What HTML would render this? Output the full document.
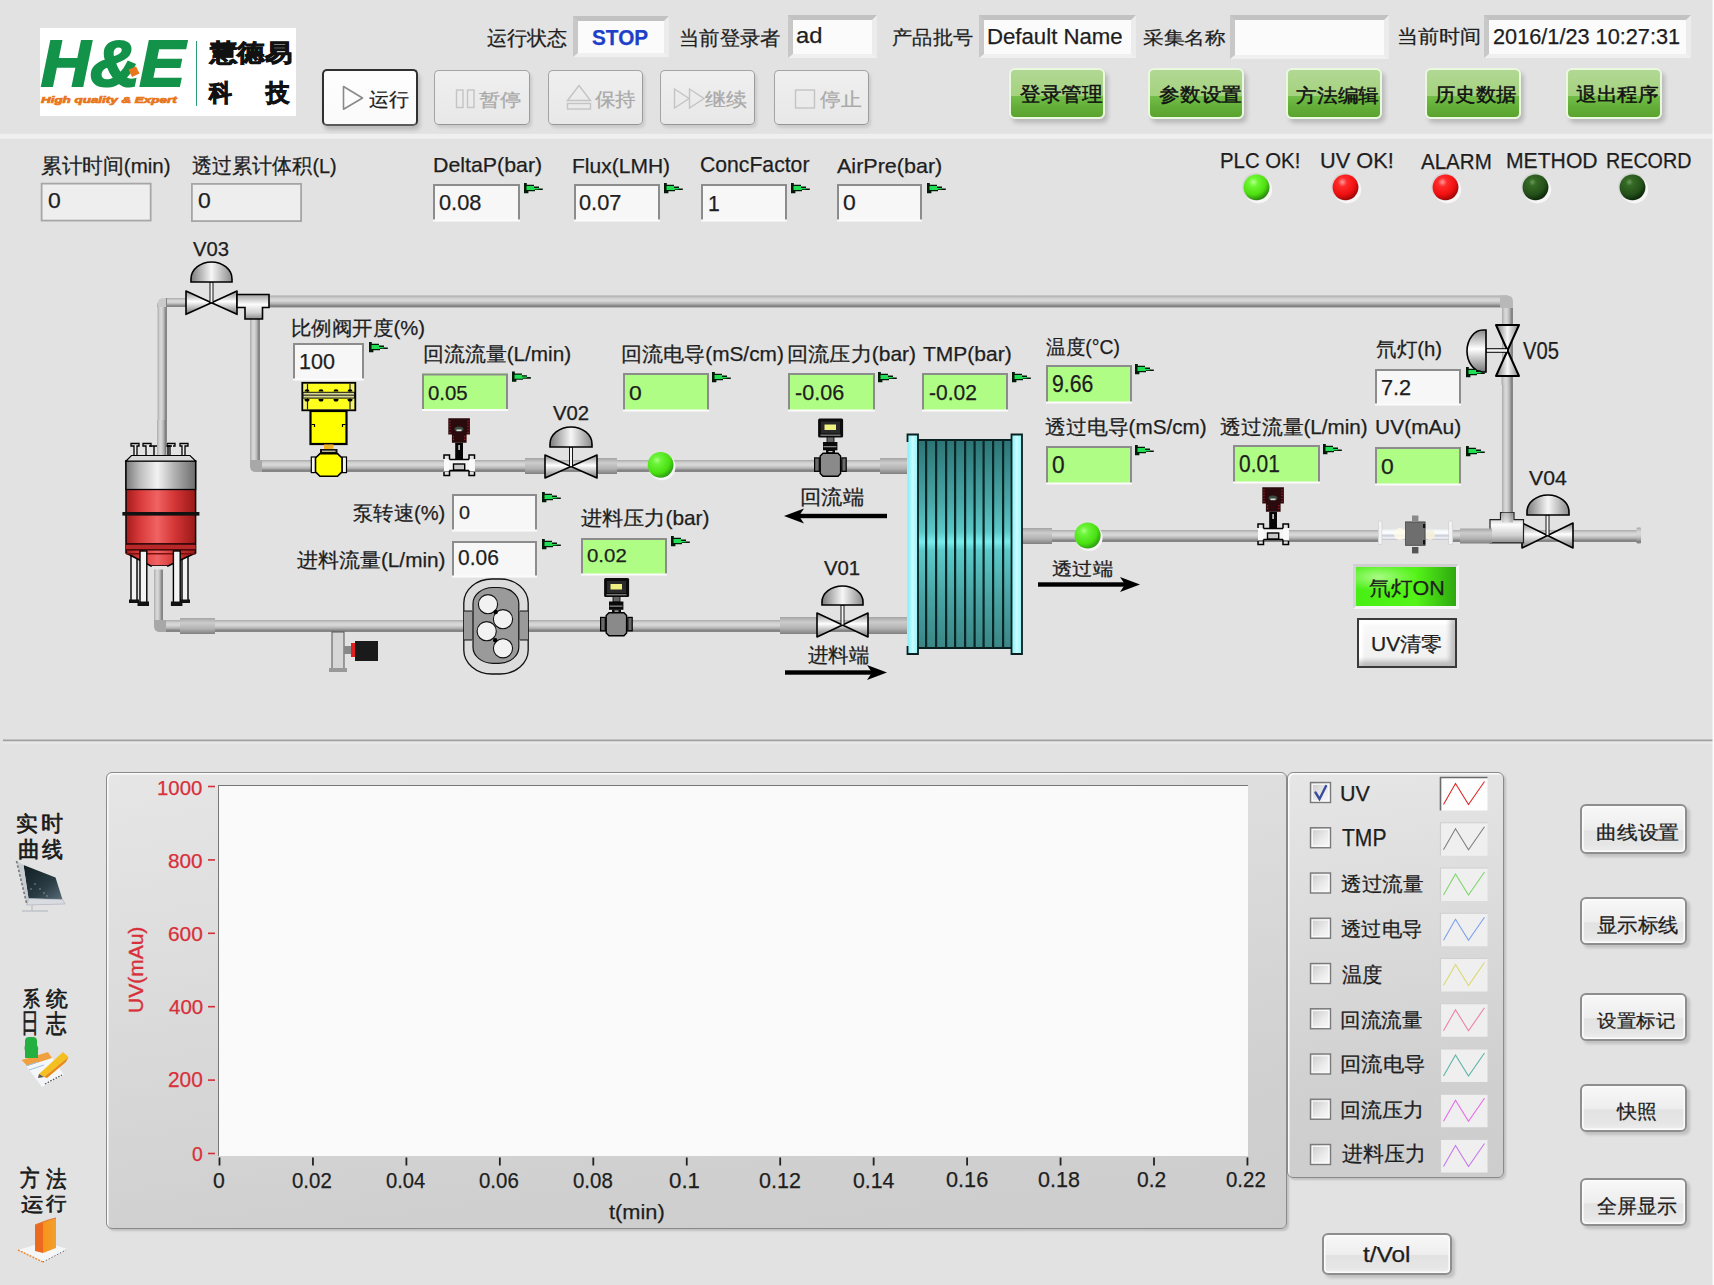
<!DOCTYPE html><html><head><meta charset="utf-8"><style>
*{margin:0;padding:0}
html,body{width:1714px;height:1285px;overflow:hidden;background:#e2e2e2}
body{position:relative;font-family:"Liberation Sans",sans-serif}
.t{position:absolute;white-space:nowrap;transform-origin:0 0;-webkit-text-stroke:0.25px currentColor}
.inset{position:absolute;background:#fbfbfb;border-style:solid;border-width:5px 5px 4px 5px;border-color:#c2c2c2 #ececec #f0f0f0 #c8c8c8}
.btn{position:absolute;border-radius:5px;box-sizing:content-box}
.btn.focus{border:2.2px solid #303030;border-bottom-color:#5a5a5a;background:linear-gradient(#fefefe,#fafafa);box-shadow:2px 4px 4px rgba(0,0,0,.18)}
.btn.dis{border:1.8px solid #a4a4a4;border-bottom-color:#969696;border-right-color:#9c9c9c;background:linear-gradient(#efefef,#e8e8e8);box-shadow:2px 3px 3px rgba(0,0,0,.10)}
.gbtn{position:absolute;width:92px;height:47px;border:2.5px solid #eaf8e0;border-radius:6px;background:linear-gradient(#b2d894,#a4d27e 55%,#74bd4a 56%,#62ad38 80%,#5aa32e);box-shadow:3px 4px 4px rgba(0,0,0,.18)}
.panel{position:absolute;border:1.6px solid #8a8a8a;border-radius:6px;background:linear-gradient(172deg,#e6e6e6,#dcdcdc 35%,#d0d0d0 75%,#cdcdcd);box-shadow:inset 1.5px 1.5px 0 #fbfbfb,2px 2px 2px rgba(0,0,0,.15)}
.wbtn{position:absolute;box-sizing:content-box;border:2px solid #8e8e8e;border-radius:6px;background:linear-gradient(#f8f8f8,#ededed 52%,#e2e2e2 54%,#e6e6e6 85%,#eeeeee);box-shadow:inset 0 0 0 1.6px #fbfbfb,3px 3px 3px rgba(0,0,0,.15)}
</style></head><body><svg width="1714" height="1285" style="position:absolute;left:0;top:0"><defs>
<linearGradient id="pH" x1="0" y1="0" x2="0" y2="1"><stop offset="0" stop-color="#a9a9a9"/><stop offset=".22" stop-color="#d0d0d0"/><stop offset=".42" stop-color="#d9d9d9"/><stop offset=".65" stop-color="#bababa"/><stop offset=".9" stop-color="#7c7c7c"/><stop offset="1" stop-color="#8e8e8e"/></linearGradient>
<linearGradient id="pV" x1="0" y1="0" x2="1" y2="0"><stop offset="0" stop-color="#a9a9a9"/><stop offset=".22" stop-color="#d0d0d0"/><stop offset=".42" stop-color="#d9d9d9"/><stop offset=".65" stop-color="#bababa"/><stop offset=".9" stop-color="#7c7c7c"/><stop offset="1" stop-color="#8e8e8e"/></linearGradient>
<linearGradient id="pHs" x1="0" y1="0" x2="0" y2="1"><stop offset="0" stop-color="#a4a4a4"/><stop offset=".3" stop-color="#cccccc"/><stop offset=".65" stop-color="#b4b4b4"/><stop offset="1" stop-color="#808080"/></linearGradient>
<linearGradient id="metV" x1="0" y1="0" x2="0" y2="1"><stop offset="0" stop-color="#8a8a8a"/><stop offset=".45" stop-color="#ffffff"/><stop offset="1" stop-color="#777"/></linearGradient>
<linearGradient id="metH" x1="0" y1="0" x2="1" y2="0"><stop offset="0" stop-color="#7c7c7c"/><stop offset=".5" stop-color="#f6f6f6"/><stop offset="1" stop-color="#8a8a8a"/></linearGradient>
<linearGradient id="silver" x1="0" y1="0" x2="1" y2="0"><stop offset="0" stop-color="#7a7a7a"/><stop offset=".2" stop-color="#bdbdbd"/><stop offset=".45" stop-color="#f2f2f2"/><stop offset=".7" stop-color="#b0b0b0"/><stop offset="1" stop-color="#6c6c6c"/></linearGradient>
<linearGradient id="redT" x1="0" y1="0" x2="1" y2="0"><stop offset="0" stop-color="#a51c1c"/><stop offset=".2" stop-color="#d83a3a"/><stop offset=".45" stop-color="#f06262"/><stop offset=".7" stop-color="#d33535"/><stop offset="1" stop-color="#9a1818"/></linearGradient>
<linearGradient id="teal" x1="0" y1="0" x2="0" y2="1"><stop offset="0" stop-color="#2c7475"/><stop offset=".3" stop-color="#4aa8a8"/><stop offset=".44" stop-color="#5cc8c8"/><stop offset=".49" stop-color="#78ecec"/><stop offset=".53" stop-color="#5ccaca"/><stop offset=".75" stop-color="#4aa4a4"/><stop offset="1" stop-color="#3a8686"/></linearGradient>
<linearGradient id="tee" x1="0" y1="0" x2="0" y2="1"><stop offset="0" stop-color="#a0a0a0"/><stop offset=".4" stop-color="#fcfcfc"/><stop offset=".75" stop-color="#d0d0d0"/><stop offset="1" stop-color="#8c8c8c"/></linearGradient>
<linearGradient id="glass" x1="0" y1="0" x2="0" y2="1"><stop offset="0" stop-color="#f0f2f6"/><stop offset=".35" stop-color="#ffffff"/><stop offset=".6" stop-color="#c8ccd6"/><stop offset=".8" stop-color="#f6f6fa"/><stop offset="1" stop-color="#b8bcc4"/></linearGradient>
<linearGradient id="cyanF" x1="0" y1="0" x2="1" y2="0"><stop offset="0" stop-color="#7ff0f8"/><stop offset=".5" stop-color="#c8fcff"/><stop offset="1" stop-color="#8ff4fa"/></linearGradient>
<radialGradient id="ledG" cx=".38" cy=".3" r=".7"><stop offset="0" stop-color="#b4ff90"/><stop offset=".25" stop-color="#6cf830"/><stop offset=".7" stop-color="#4ede10"/><stop offset="1" stop-color="#2a8a10"/></radialGradient>
<radialGradient id="ledR" cx=".38" cy=".3" r=".7"><stop offset="0" stop-color="#ff9a9a"/><stop offset=".25" stop-color="#ff2a2a"/><stop offset=".7" stop-color="#f01010"/><stop offset="1" stop-color="#a00808"/></radialGradient>
<radialGradient id="ledD" cx=".38" cy=".3" r=".7"><stop offset="0" stop-color="#6a9a5a"/><stop offset=".2" stop-color="#356a25"/><stop offset=".7" stop-color="#24501a"/><stop offset="1" stop-color="#0e2a0a"/></radialGradient>
<radialGradient id="gBall" cx=".36" cy=".32" r=".72"><stop offset="0" stop-color="#a8ff80"/><stop offset=".22" stop-color="#6cf43a"/><stop offset=".7" stop-color="#48e010"/><stop offset="1" stop-color="#2c9a14"/></radialGradient>
<linearGradient id="yel" x1="0" y1="0" x2="1" y2="0"><stop offset="0" stop-color="#e0e000"/><stop offset=".5" stop-color="#ffff30"/><stop offset="1" stop-color="#e8e800"/></linearGradient>
</defs><rect x="0" y="133.8" width="1714" height="5" fill="#efefef"/><rect x="3" y="739.5" width="1710" height="2" fill="#a0a0a0"/><rect x="3" y="741.5" width="1710" height="2" fill="#e9e9e9"/><rect x="1712.5" y="0" width="2" height="1285" fill="#fcfcfc"/><rect x="40.7" y="182.7" width="110.89999999999999" height="38.80000000000001" fill="#eeeeee"/><rect x="41.6" y="183.6" width="109.1" height="37.000000000000014" fill="none" stroke="#a6a6a6" stroke-width="1.8"/><rect x="191" y="183" width="111" height="39" fill="#eeeeee"/><rect x="191.9" y="183.9" width="109.2" height="37.2" fill="none" stroke="#a6a6a6" stroke-width="1.8"/><rect x="433" y="184" width="87" height="36" fill="#f7f7f7"/><path d="M434 220V185H519V220" fill="none" stroke="#8c8c8c" stroke-width="2"/><rect x="433" y="219.5" width="87" height="2" fill="#fbfbfb"/><g transform="translate(524,183)"><path d="M0 0H2.8V1.8H10V3.6H15V5.4H18.8V7.1H11V8.2H4.4V10.2H0Z" fill="#021a06"/><path d="M2.5 3.1H10V4.9H14.8V6.2H10.8V7.1H2.5Z" fill="#22de55"/></g><rect x="574" y="184" width="86" height="36" fill="#f7f7f7"/><path d="M575 220V185H659V220" fill="none" stroke="#8c8c8c" stroke-width="2"/><rect x="574" y="219.5" width="86" height="2" fill="#fbfbfb"/><g transform="translate(664,183)"><path d="M0 0H2.8V1.8H10V3.6H15V5.4H18.8V7.1H11V8.2H4.4V10.2H0Z" fill="#021a06"/><path d="M2.5 3.1H10V4.9H14.8V6.2H10.8V7.1H2.5Z" fill="#22de55"/></g><rect x="701" y="184" width="86" height="36" fill="#f7f7f7"/><path d="M702 220V185H786V220" fill="none" stroke="#8c8c8c" stroke-width="2"/><rect x="701" y="219.5" width="86" height="2" fill="#fbfbfb"/><g transform="translate(791,183)"><path d="M0 0H2.8V1.8H10V3.6H15V5.4H18.8V7.1H11V8.2H4.4V10.2H0Z" fill="#021a06"/><path d="M2.5 3.1H10V4.9H14.8V6.2H10.8V7.1H2.5Z" fill="#22de55"/></g><rect x="837" y="184" width="85" height="36" fill="#f7f7f7"/><path d="M838 220V185H921V220" fill="none" stroke="#8c8c8c" stroke-width="2"/><rect x="837" y="219.5" width="85" height="2" fill="#fbfbfb"/><g transform="translate(927,183)"><path d="M0 0H2.8V1.8H10V3.6H15V5.4H18.8V7.1H11V8.2H4.4V10.2H0Z" fill="#021a06"/><path d="M2.5 3.1H10V4.9H14.8V6.2H10.8V7.1H2.5Z" fill="#22de55"/></g><circle cx="1258.3" cy="189.5" r="13.9" fill="#f6f6f6"/><circle cx="1255.9" cy="186.70000000000002" r="13.700000000000001" fill="#c8c8c8" opacity=".55"/><circle cx="1256.5" cy="187.3" r="12.9" fill="url(#ledG)"/><circle cx="1347.3" cy="189.5" r="13.9" fill="#f6f6f6"/><circle cx="1344.9" cy="186.70000000000002" r="13.700000000000001" fill="#c8c8c8" opacity=".55"/><circle cx="1345.5" cy="187.3" r="12.9" fill="url(#ledR)"/><circle cx="1447.3" cy="189.5" r="13.9" fill="#f6f6f6"/><circle cx="1444.9" cy="186.70000000000002" r="13.700000000000001" fill="#c8c8c8" opacity=".55"/><circle cx="1445.5" cy="187.3" r="12.9" fill="url(#ledR)"/><circle cx="1537.3" cy="189.5" r="13.9" fill="#f6f6f6"/><circle cx="1534.9" cy="186.70000000000002" r="13.700000000000001" fill="#c8c8c8" opacity=".55"/><circle cx="1535.5" cy="187.3" r="12.9" fill="url(#ledD)"/><circle cx="1634.3" cy="189.5" r="13.9" fill="#f6f6f6"/><circle cx="1631.9" cy="186.70000000000002" r="13.700000000000001" fill="#c8c8c8" opacity=".55"/><circle cx="1632.5" cy="187.3" r="12.9" fill="url(#ledD)"/><rect x="157" y="298" width="33" height="9" fill="url(#pH)"/><rect x="157.6" y="298" width="9.400000000000006" height="144" fill="url(#pV)"/><rect x="268" y="295.5" width="1245" height="12.0" fill="url(#pH)"/><rect x="250" y="316" width="10" height="156" fill="url(#pV)"/><rect x="250" y="460" width="657" height="12" fill="url(#pH)"/><rect x="525" y="458" width="22" height="16" fill="url(#pHs)"/><rect x="595" y="458" width="22" height="16" fill="url(#pHs)"/><rect x="880" y="458" width="27" height="16" fill="url(#pHs)"/><rect x="154" y="566" width="9" height="66" fill="url(#pV)"/><rect x="154" y="620" width="753" height="12" fill="url(#pH)"/><rect x="180" y="618" width="35" height="16" fill="url(#pHs)"/><rect x="780" y="617" width="40" height="17" fill="url(#pHs)"/><rect x="866" y="617" width="41" height="17" fill="url(#pHs)"/><rect x="1502" y="300" width="11" height="222" fill="url(#pV)"/><rect x="1022" y="530" width="618" height="12" fill="url(#pH)"/><rect x="1022" y="528" width="30" height="16" fill="url(#pHs)"/><rect x="156" y="297" width="6" height="6" fill="#e2e2e2"/><path d="M157.6 307V304Q157.6 298 163.6 298H166V307Z" fill="#cacaca"/><rect x="249" y="467" width="6" height="6" fill="#e2e2e2"/><path d="M250 460V466Q250 472 256 472H262V460Z" fill="#a8a8a8"/><rect x="153" y="627" width="6" height="6" fill="#e2e2e2"/><path d="M154 620V626Q154 632 160 632H166V620Z" fill="#a8a8a8"/><rect x="1508" y="295" width="6" height="6" fill="#e2e2e2"/><path d="M1500 295.5H1507Q1513 295.5 1513 301.5V308H1500Z" fill="#b8b8b8"/><path d="M186 291L211.5 302.65L186 314.3Z" fill="url(#metV)" stroke="#000" stroke-width="1.6" stroke-linejoin="round"/><path d="M237 291L211.5 302.65L237 314.3Z" fill="url(#metV)" stroke="#000" stroke-width="1.6" stroke-linejoin="round"/><rect x="210.0" y="282" width="3" height="20.649999999999977" fill="#f4f4f4" stroke="#000" stroke-width=".9"/><path d="M191 282L191 279A20.5 17 0 0 1 232 279L232 282Z" fill="url(#metH)" stroke="#000" stroke-width="1.6"/><path d="M237 294.5H269V307.5H262.5V319H245V307.5H237Z" fill="url(#tee)" stroke="#000" stroke-width="1.6"/><path d="M545 455L571.0 466.5L545 478Z" fill="url(#metV)" stroke="#000" stroke-width="1.6" stroke-linejoin="round"/><path d="M597 455L571.0 466.5L597 478Z" fill="url(#metV)" stroke="#000" stroke-width="1.6" stroke-linejoin="round"/><rect x="569.5" y="447" width="3" height="19.5" fill="#f4f4f4" stroke="#000" stroke-width=".9"/><path d="M550 447L550 444A21.0 17 0 0 1 592 444L592 447Z" fill="url(#metH)" stroke="#000" stroke-width="1.6"/><path d="M817 613L842.5 625.0L817 637Z" fill="url(#metV)" stroke="#000" stroke-width="1.6" stroke-linejoin="round"/><path d="M868 613L842.5 625.0L868 637Z" fill="url(#metV)" stroke="#000" stroke-width="1.6" stroke-linejoin="round"/><rect x="841.0" y="605" width="3" height="20.0" fill="#f4f4f4" stroke="#000" stroke-width=".9"/><path d="M822 605L822 602A20.5 16 0 0 1 863 602L863 605Z" fill="url(#metH)" stroke="#000" stroke-width="1.6"/><path d="M1522 523L1547.5 535.5L1522 548Z" fill="url(#metV)" stroke="#000" stroke-width="1.6" stroke-linejoin="round"/><path d="M1573 523L1547.5 535.5L1573 548Z" fill="url(#metV)" stroke="#000" stroke-width="1.6" stroke-linejoin="round"/><rect x="1546.0" y="515" width="3" height="20.5" fill="#f4f4f4" stroke="#000" stroke-width=".9"/><path d="M1527 515L1527 512A21.0 17 0 0 1 1569 512L1569 515Z" fill="url(#metH)" stroke="#000" stroke-width="1.6"/><path d="M1490 519.6H1500.5V512.5H1514V519.6H1523.5V542.9H1490Z" fill="url(#tee)" stroke="#222" stroke-width="1.2"/><rect x="1502" y="512.5" width="11" height="10" fill="url(#pV)" opacity=".5"/><rect x="1636.5" y="527.5" width="4.5" height="16" rx="1" fill="url(#pH)"/><rect x="1501.5" y="376" width="11.5" height="9" fill="url(#pV)"/><path d="M1496 325L1507.5 350.5L1519 325Z" fill="url(#metH)" stroke="#000" stroke-width="2" stroke-linejoin="round"/><path d="M1496 376L1507.5 350.5L1519 376Z" fill="url(#metH)" stroke="#000" stroke-width="2" stroke-linejoin="round"/><rect x="1486" y="348.7" width="21.5" height="3.6" fill="#f4f4f4" stroke="#000" stroke-width="1"/><path d="M1486 330L1483 330A16 21.0 0 0 0 1483 372L1486 372Z" fill="url(#metV)" stroke="#000" stroke-width="1.6"/><circle cx="662.1" cy="466.8" r="13.4" fill="#f6f6f6"/><circle cx="660.6" cy="464.8" r="12.9" fill="url(#gBall)"/><circle cx="1089.1" cy="537.5" r="13.5" fill="#f6f6f6"/><circle cx="1087.6" cy="535.5" r="13" fill="url(#gBall)"/><rect x="794" y="513.8" width="93" height="4.4" fill="#000"/><path d="M784 516L804 508.5L799 516L804 523.5Z" fill="#000"/><rect x="1038" y="582.3" width="92" height="4.4" fill="#000"/><path d="M1140 584.5L1120 577.0L1125 584.5L1120 592.0Z" fill="#000"/><rect x="785" y="670.3" width="92" height="4.4" fill="#000"/><path d="M887 672.5L867 665.0L872 672.5L867 680.0Z" fill="#000"/><rect x="917" y="440" width="95" height="208" fill="url(#teal)" stroke="#0a2020" stroke-width="2"/><rect x="925" y="440" width="2.2" height="208" fill="#0a2626"/><rect x="935" y="440" width="2.2" height="208" fill="#0a2626"/><rect x="945" y="440" width="2.2" height="208" fill="#0a2626"/><rect x="954" y="440" width="2.2" height="208" fill="#0a2626"/><rect x="964" y="440" width="2.2" height="208" fill="#0a2626"/><rect x="973.5" y="440" width="2.2" height="208" fill="#0a2626"/><rect x="982.5" y="440" width="2.2" height="208" fill="#0a2626"/><rect x="992" y="440" width="2.2" height="208" fill="#0a2626"/><rect x="1002" y="440" width="2.2" height="208" fill="#0a2626"/><path d="M907.5 442V434.5H918V654H907.5V646" fill="url(#cyanF)" stroke="#0a2020" stroke-width="1.8"/><path d="M1011.5 434.5H1022V654H1011.5Z" fill="url(#cyanF)" stroke="#0a2020" stroke-width="1.8"/><g><rect x="131" y="556" width="6" height="45" fill="#f2f2f2" stroke="#000" stroke-width="1.4"/><rect x="129" y="599.5" width="10" height="3.5" fill="#111"/><rect x="182" y="556" width="6" height="45" fill="#f2f2f2" stroke="#000" stroke-width="1.4"/><rect x="180" y="599.5" width="10" height="3.5" fill="#111"/><path d="M126 461V553L151 566H168L195.6 553V461Z" fill="url(#redT)" stroke="#000" stroke-width="1.5"/><rect x="126" y="553" width="69.6" height="1.5" fill="#7a1010"/><rect x="122.4" y="512" width="77" height="3.6" fill="#111"/><rect x="126" y="543" width="69.6" height="1.8" fill="#3a0808"/><rect x="126" y="545" width="69.6" height="4.5" fill="#b82828"/><rect x="126" y="549" width="69.6" height="1.6" fill="#4a0a0a"/><rect x="126" y="461" width="69.6" height="28.5" fill="url(#silver)" stroke="#000" stroke-width="1.3"/><path d="M126 461L131.5 455.5H190L195.6 461Z" fill="#d8d8d8" stroke="#000" stroke-width="1.1"/><path d="M134 455V446H131V443.5H139V446H137V455M146 455V446H143V443.5H151V446H149M170 455V446H167V443.5H175V446H173M182 455V446H180V443.5H188V446H185V455" fill="#eee" stroke="#000" stroke-width="1.3"/><path d="M150 446H172M154 446V455M168 446V455" stroke="#000" stroke-width="1.4"/><rect x="157" y="420" width="9.5" height="35" fill="url(#pV)"/><rect x="152" y="566" width="15" height="3.5" fill="#e4e4e4"/><rect x="140" y="551" width="6.8" height="52" fill="#f4f4f4" stroke="#000" stroke-width="1.4"/><rect x="137.5" y="601.5" width="11.5" height="4.5" fill="#111"/><rect x="173.4" y="551" width="6.8" height="52" fill="#f4f4f4" stroke="#000" stroke-width="1.4"/><rect x="170.9" y="601.5" width="11.5" height="4.5" fill="#111"/></g><rect x="302.3" y="382.8" width="53" height="27.5" fill="#f4f46a" stroke="#000" stroke-width="1.8"/><rect x="308" y="384" width="41.5" height="25" fill="#ffff1e"/><path d="M307.5 383.5V409.5M350 383.5V409.5" stroke="#222" stroke-width="1.2"/><rect x="303" y="392.3" width="51.5" height="5.8" fill="#d8d890" stroke="#111" stroke-width="1"/><rect x="303" y="394.6" width="51.5" height="1.1" fill="#222"/><path d="M304.5 391.5A2.5 2.3 0 0 1 309.5 391.5Z" fill="#000"/><path d="M304.5 399A2.5 2.6 0 0 0 309.5 399Z" fill="#000"/><path d="M318.5 391.5A2.5 2.3 0 0 1 323.5 391.5Z" fill="#000"/><path d="M318.5 399A2.5 2.6 0 0 0 323.5 399Z" fill="#000"/><path d="M333.5 391.5A2.5 2.3 0 0 1 338.5 391.5Z" fill="#000"/><path d="M333.5 399A2.5 2.6 0 0 0 338.5 399Z" fill="#000"/><path d="M347.5 391.5A2.5 2.3 0 0 1 352.5 391.5Z" fill="#000"/><path d="M347.5 399A2.5 2.6 0 0 0 352.5 399Z" fill="#000"/><rect x="310.5" y="411" width="36" height="33" fill="#ffff00" stroke="#000" stroke-width="2.2"/><path d="M311.5 424.5H314.5V427M345.5 424.5H342.5V427" fill="none" stroke="#000" stroke-width="1.2"/><rect x="324" y="444.4" width="9.4" height="4.8" fill="#f0b428"/><rect x="320" y="449" width="17.5" height="4.6" fill="#111"/><rect x="322" y="450.6" width="13.5" height="1.3" fill="#c8c8a0"/><rect x="311.3" y="457" width="4.5" height="15.6" fill="#f4f4f0" stroke="#000" stroke-width="1.2"/><rect x="342" y="457" width="4.5" height="15.6" fill="#f4f4f0" stroke="#000" stroke-width="1.2"/><path d="M320 453.6H337.5L342 458V471.8L337.5 476.3H320L315.5 471.8V458Z" fill="#ffff00" stroke="#000" stroke-width="1.6"/><g transform="translate(0.0,0)"><path d="M448.3 418.2H469.9V434.5H466.6V442.7H451.9V434.5H448.3Z" fill="#2a0a0c"/><path d="M450 420.5V433M468 420.5V433M453.5 436V441M464.8 436V441" stroke="#b02030" stroke-width="1.2" stroke-dasharray="1.2 1.6"/><ellipse cx="459" cy="429" rx="4.5" ry="2.6" fill="#3a4a40"/><rect x="456.5" y="429.5" width="5" height="1.6" fill="#ddd"/><rect x="455.2" y="442.7" width="7.8" height="17.5" fill="#050505"/><rect x="458.3" y="445" width="1.6" height="5" fill="#ccc"/><rect x="444" y="459" width="31" height="12" fill="#f4f4f4"/><path d="M449 459.5H469.5M449 470.5H469.5" stroke="#000" stroke-width="1.5"/><path d="M446.5 455H444V459M446.5 455H449.5V459.5M449.5 470.5V475.5H444V472M472 455H474.5V459M472 455H469V459.5M469 470.5V475.5H474.5V472" fill="none" stroke="#000" stroke-width="1.5"/><rect x="444" y="459.5" width="5.5" height="11" fill="#fafafa"/><rect x="469" y="459.5" width="5.5" height="11" fill="#fafafa"/><rect x="453.5" y="464" width="11.2" height="6" fill="#c8c8c8" stroke="#000" stroke-width="1.4"/></g><g transform="translate(814.0,69)"><path d="M448.3 418.2H469.9V434.5H466.6V442.7H451.9V434.5H448.3Z" fill="#2a0a0c"/><path d="M450 420.5V433M468 420.5V433M453.5 436V441M464.8 436V441" stroke="#b02030" stroke-width="1.2" stroke-dasharray="1.2 1.6"/><ellipse cx="459" cy="429" rx="4.5" ry="2.6" fill="#3a4a40"/><rect x="456.5" y="429.5" width="5" height="1.6" fill="#ddd"/><rect x="455.2" y="442.7" width="7.8" height="17.5" fill="#050505"/><rect x="458.3" y="445" width="1.6" height="5" fill="#ccc"/><rect x="444" y="459" width="31" height="12" fill="#f4f4f4"/><path d="M449 459.5H469.5M449 470.5H469.5" stroke="#000" stroke-width="1.5"/><path d="M446.5 455H444V459M446.5 455H449.5V459.5M449.5 470.5V475.5H444V472M472 455H474.5V459M472 455H469V459.5M469 470.5V475.5H474.5V472" fill="none" stroke="#000" stroke-width="1.5"/><rect x="444" y="459.5" width="5.5" height="11" fill="#fafafa"/><rect x="469" y="459.5" width="5.5" height="11" fill="#fafafa"/><rect x="453.5" y="464" width="11.2" height="6" fill="#c8c8c8" stroke="#000" stroke-width="1.4"/></g><g transform="translate(0.0,0)"><rect x="818.1" y="418.5" width="25" height="19" rx="1.5" fill="#0c0c0c"/><rect x="821" y="421.5" width="19" height="12" fill="#2a2a2a"/><rect x="824.5" y="424.5" width="11.5" height="5.5" fill="#eef080"/><rect x="820.5" y="434.5" width="20" height="1.4" fill="#777"/><rect x="827" y="437" width="7" height="5.5" fill="#666" stroke="#000" stroke-width=".8"/><rect x="823" y="442" width="14.4" height="8.3" fill="#0a0a0a"/><rect x="823.5" y="446" width="13" height="1.3" fill="#888"/><rect x="826" y="450" width="9" height="3.5" fill="#0a0a0a"/><rect x="828.5" y="451" width="4" height="1.2" fill="#ccc"/><rect x="814.6" y="457.9" width="4.7" height="13.4" fill="#6a6a6a" stroke="#000" stroke-width="1.2"/><rect x="841.8" y="457.9" width="4.4" height="13.4" fill="#6a6a6a" stroke="#000" stroke-width="1.2"/><path d="M823 453.2H838L840.6 456V473.5L838 476.3H823L820.2 473.5V456Z" fill="#8a8a8a" stroke="#000" stroke-width="1.4"/></g><g transform="translate(-214.0,159.5)"><rect x="818.1" y="418.5" width="25" height="19" rx="1.5" fill="#0c0c0c"/><rect x="821" y="421.5" width="19" height="12" fill="#2a2a2a"/><rect x="824.5" y="424.5" width="11.5" height="5.5" fill="#eef080"/><rect x="820.5" y="434.5" width="20" height="1.4" fill="#777"/><rect x="827" y="437" width="7" height="5.5" fill="#666" stroke="#000" stroke-width=".8"/><rect x="823" y="442" width="14.4" height="8.3" fill="#0a0a0a"/><rect x="823.5" y="446" width="13" height="1.3" fill="#888"/><rect x="826" y="450" width="9" height="3.5" fill="#0a0a0a"/><rect x="828.5" y="451" width="4" height="1.2" fill="#ccc"/><rect x="814.6" y="457.9" width="4.7" height="13.4" fill="#6a6a6a" stroke="#000" stroke-width="1.2"/><rect x="841.8" y="457.9" width="4.4" height="13.4" fill="#6a6a6a" stroke="#000" stroke-width="1.2"/><path d="M823 453.2H838L840.6 456V473.5L838 476.3H823L820.2 473.5V456Z" fill="#8a8a8a" stroke="#000" stroke-width="1.4"/></g><rect x="463.8" y="579" width="64.4" height="95" rx="28" ry="24" fill="#dcdcdc" stroke="#111" stroke-width="1.3"/><rect x="464" y="611" width="64" height="29" fill="#9a9a9a"/><path d="M464 611H472M520 611H528M464 640H472M520 640H528" stroke="#111" stroke-width="1.2"/><rect x="473" y="587.5" width="45.8" height="75.8" rx="20" ry="16" fill="#9a9a9a" stroke="#111" stroke-width="1.2"/><circle cx="488" cy="604.2" r="9.6" fill="#f2f2f2" stroke="#111" stroke-width="1.1"/><circle cx="503" cy="619.2" r="9.6" fill="#f2f2f2" stroke="#111" stroke-width="1.1"/><circle cx="486.7" cy="631.2" r="9.6" fill="#f2f2f2" stroke="#111" stroke-width="1.1"/><circle cx="503" cy="648.3" r="9.6" fill="#f2f2f2" stroke="#111" stroke-width="1.1"/><circle cx="495.7" cy="612" r="2.2" fill="#000"/><circle cx="495.2" cy="640.2" r="2.2" fill="#000"/><rect x="332" y="632" width="12" height="38" fill="#d6d6d6" stroke="#555" stroke-width="1"/><rect x="329" y="668" width="18" height="4" fill="#999"/><rect x="344" y="646" width="10" height="8" fill="#888"/><rect x="351" y="643" width="4" height="14" fill="#e02020"/><rect x="355" y="641" width="23" height="20" fill="#1a1a1a"/><rect x="1378" y="526" width="75" height="19" fill="#e2e2e2"/><rect x="1381.5" y="529.5" width="68" height="10.5" fill="url(#glass)"/><rect x="1378.5" y="521" width="3.4" height="23.7" fill="#f4f4f8" stroke="#ccc" stroke-width=".6"/><rect x="1448.8" y="521" width="3.4" height="23.7" fill="#f4f4f8" stroke="#ccc" stroke-width=".6"/><ellipse cx="1400" cy="534" rx="6" ry="6" fill="#fffbe8" opacity=".8"/><ellipse cx="1430" cy="535" rx="5" ry="5" fill="#f4f0dc" opacity=".9"/><rect x="1405.6" y="521.9" width="19.5" height="23.4" fill="#6e6e6e" stroke="#333" stroke-width=".7"/><rect x="1423" y="524" width="2.2" height="4" fill="#111"/><rect x="1423" y="540" width="2.2" height="4.5" fill="#111"/><rect x="1412" y="515.5" width="6.4" height="6.5" fill="#8a8a8a"/><rect x="1412" y="547" width="6.4" height="6.4" fill="#555"/><rect x="1460" y="528.5" width="32" height="15" fill="url(#pHs)"/><rect x="293" y="343" width="71" height="36" fill="#f7f7f7"/><path d="M294 379V344H363V379" fill="none" stroke="#8c8c8c" stroke-width="2"/><rect x="293" y="378.5" width="71" height="2" fill="#fbfbfb"/><g transform="translate(369,342)"><path d="M0 0H2.8V1.8H10V3.6H15V5.4H18.8V7.1H11V8.2H4.4V10.2H0Z" fill="#021a06"/><path d="M2.5 3.1H10V4.9H14.8V6.2H10.8V7.1H2.5Z" fill="#22de55"/></g><rect x="422" y="373.4" width="86" height="36.10000000000002" fill="#b0fd86"/><path d="M423 409.5V374.4H507V409.5" fill="none" stroke="#8c8c8c" stroke-width="2"/><rect x="422" y="409.0" width="86" height="2" fill="#fbfbfb"/><g transform="translate(512,371.6)"><path d="M0 0H2.8V1.8H10V3.6H15V5.4H18.8V7.1H11V8.2H4.4V10.2H0Z" fill="#021a06"/><path d="M2.5 3.1H10V4.9H14.8V6.2H10.8V7.1H2.5Z" fill="#22de55"/></g><rect x="623" y="373" width="86" height="37" fill="#b0fd86"/><path d="M624 410V374H708V410" fill="none" stroke="#8c8c8c" stroke-width="2"/><rect x="623" y="409.5" width="86" height="2" fill="#fbfbfb"/><g transform="translate(712,372)"><path d="M0 0H2.8V1.8H10V3.6H15V5.4H18.8V7.1H11V8.2H4.4V10.2H0Z" fill="#021a06"/><path d="M2.5 3.1H10V4.9H14.8V6.2H10.8V7.1H2.5Z" fill="#22de55"/></g><rect x="788" y="373" width="87" height="37" fill="#b0fd86"/><path d="M789 410V374H874V410" fill="none" stroke="#8c8c8c" stroke-width="2"/><rect x="788" y="409.5" width="87" height="2" fill="#fbfbfb"/><g transform="translate(878,372)"><path d="M0 0H2.8V1.8H10V3.6H15V5.4H18.8V7.1H11V8.2H4.4V10.2H0Z" fill="#021a06"/><path d="M2.5 3.1H10V4.9H14.8V6.2H10.8V7.1H2.5Z" fill="#22de55"/></g><rect x="922" y="373" width="86" height="37" fill="#b0fd86"/><path d="M923 410V374H1007V410" fill="none" stroke="#8c8c8c" stroke-width="2"/><rect x="922" y="409.5" width="86" height="2" fill="#fbfbfb"/><g transform="translate(1012,372)"><path d="M0 0H2.8V1.8H10V3.6H15V5.4H18.8V7.1H11V8.2H4.4V10.2H0Z" fill="#021a06"/><path d="M2.5 3.1H10V4.9H14.8V6.2H10.8V7.1H2.5Z" fill="#22de55"/></g><rect x="1046" y="365" width="86" height="37" fill="#b0fd86"/><path d="M1047 402V366H1131V402" fill="none" stroke="#8c8c8c" stroke-width="2"/><rect x="1046" y="401.5" width="86" height="2" fill="#fbfbfb"/><g transform="translate(1135,364)"><path d="M0 0H2.8V1.8H10V3.6H15V5.4H18.8V7.1H11V8.2H4.4V10.2H0Z" fill="#021a06"/><path d="M2.5 3.1H10V4.9H14.8V6.2H10.8V7.1H2.5Z" fill="#22de55"/></g><rect x="1046" y="446" width="86" height="37" fill="#b0fd86"/><path d="M1047 483V447H1131V483" fill="none" stroke="#8c8c8c" stroke-width="2"/><rect x="1046" y="482.5" width="86" height="2" fill="#fbfbfb"/><g transform="translate(1135,445)"><path d="M0 0H2.8V1.8H10V3.6H15V5.4H18.8V7.1H11V8.2H4.4V10.2H0Z" fill="#021a06"/><path d="M2.5 3.1H10V4.9H14.8V6.2H10.8V7.1H2.5Z" fill="#22de55"/></g><rect x="1233" y="445" width="87" height="37" fill="#b0fd86"/><path d="M1234 482V446H1319V482" fill="none" stroke="#8c8c8c" stroke-width="2"/><rect x="1233" y="481.5" width="87" height="2" fill="#fbfbfb"/><g transform="translate(1323,444)"><path d="M0 0H2.8V1.8H10V3.6H15V5.4H18.8V7.1H11V8.2H4.4V10.2H0Z" fill="#021a06"/><path d="M2.5 3.1H10V4.9H14.8V6.2H10.8V7.1H2.5Z" fill="#22de55"/></g><rect x="1375" y="369" width="86" height="35" fill="#f7f7f7"/><path d="M1376 404V370H1460V404" fill="none" stroke="#8c8c8c" stroke-width="2"/><rect x="1375" y="403.5" width="86" height="2" fill="#fbfbfb"/><g transform="translate(1466,367)"><path d="M0 0H2.8V1.8H10V3.6H15V5.4H18.8V7.1H11V8.2H4.4V10.2H0Z" fill="#021a06"/><path d="M2.5 3.1H10V4.9H14.8V6.2H10.8V7.1H2.5Z" fill="#22de55"/></g><rect x="1375" y="447" width="86" height="37" fill="#b0fd86"/><path d="M1376 484V448H1460V484" fill="none" stroke="#8c8c8c" stroke-width="2"/><rect x="1375" y="483.5" width="86" height="2" fill="#fbfbfb"/><g transform="translate(1466,446)"><path d="M0 0H2.8V1.8H10V3.6H15V5.4H18.8V7.1H11V8.2H4.4V10.2H0Z" fill="#021a06"/><path d="M2.5 3.1H10V4.9H14.8V6.2H10.8V7.1H2.5Z" fill="#22de55"/></g><rect x="452" y="494" width="85" height="36" fill="#f7f7f7"/><path d="M453 530V495H536V530" fill="none" stroke="#8c8c8c" stroke-width="2"/><rect x="452" y="529.5" width="85" height="2" fill="#fbfbfb"/><g transform="translate(542,492)"><path d="M0 0H2.8V1.8H10V3.6H15V5.4H18.8V7.1H11V8.2H4.4V10.2H0Z" fill="#021a06"/><path d="M2.5 3.1H10V4.9H14.8V6.2H10.8V7.1H2.5Z" fill="#22de55"/></g><rect x="452" y="541" width="85" height="35" fill="#f7f7f7"/><path d="M453 576V542H536V576" fill="none" stroke="#8c8c8c" stroke-width="2"/><rect x="452" y="575.5" width="85" height="2" fill="#fbfbfb"/><g transform="translate(542,539)"><path d="M0 0H2.8V1.8H10V3.6H15V5.4H18.8V7.1H11V8.2H4.4V10.2H0Z" fill="#021a06"/><path d="M2.5 3.1H10V4.9H14.8V6.2H10.8V7.1H2.5Z" fill="#22de55"/></g><rect x="581" y="538" width="86" height="36" fill="#b0fd86"/><path d="M582 574V539H666V574" fill="none" stroke="#8c8c8c" stroke-width="2"/><rect x="581" y="573.5" width="86" height="2" fill="#fbfbfb"/><g transform="translate(671,536)"><path d="M0 0H2.8V1.8H10V3.6H15V5.4H18.8V7.1H11V8.2H4.4V10.2H0Z" fill="#021a06"/><path d="M2.5 3.1H10V4.9H14.8V6.2H10.8V7.1H2.5Z" fill="#22de55"/></g></svg><div style="position:absolute;left:40px;top:28px;width:256px;height:87.5px;background:#fff"></div><div style="position:absolute;left:195.5px;top:41px;width:1.6px;height:65px;background:#2f9a78"></div><div class="inset" style="left:573px;top:16.4px;width:85.5px;height:31.300000000000004px"></div><div class="inset" style="left:788px;top:15px;width:79px;height:34px"></div><div class="inset" style="left:979px;top:15px;width:147px;height:34px"></div><div class="inset" style="left:1230px;top:15px;width:149px;height:35px"></div><div class="inset" style="left:1484px;top:14.5px;width:196.5px;height:34.5px"></div><div class="btn focus" style="left:321.6px;top:69.2px;width:92.6px;height:53px"></div><div class="btn dis" style="left:433.8px;top:70px;width:94.09999999999997px;height:52.5px"></div><div class="btn dis" style="left:548px;top:70px;width:93px;height:52.5px"></div><div class="btn dis" style="left:660px;top:70px;width:93.29999999999995px;height:52.5px"></div><div class="btn dis" style="left:773.7px;top:70px;width:93.69999999999993px;height:52.5px"></div><svg style="position:absolute;left:0;top:0" width="900" height="130"><path d="M343.5 86.5L362.5 98L343.5 109.2Z" fill="none" stroke="#8a8a8a" stroke-width="1.6" stroke-linejoin="round"/><rect x="456.5" y="90" width="6.5" height="17.5" fill="none" stroke="#c4c4c4" stroke-width="1.4"/><rect x="467.5" y="90" width="6.5" height="17.5" fill="none" stroke="#c4c4c4" stroke-width="1.4"/><path d="M567.5 100.5L579 85.5L590.5 100.5Z" fill="none" stroke="#c4c4c4" stroke-width="1.4"/><rect x="567.5" y="103.5" width="23" height="5.5" fill="none" stroke="#c4c4c4" stroke-width="1.4"/><path d="M674.5 89L689 98.5L674.5 108ZM689.5 89L704 98.5L689.5 108Z" fill="none" stroke="#c4c4c4" stroke-width="1.4"/><rect x="795.5" y="90" width="19" height="18" fill="none" stroke="#c4c4c4" stroke-width="1.4"/></svg><div class="gbtn" style="left:1009px;top:68.4px"></div><div class="gbtn" style="left:1148px;top:68.4px"></div><div class="gbtn" style="left:1286px;top:68.4px"></div><div class="gbtn" style="left:1425px;top:68.4px"></div><div class="gbtn" style="left:1566px;top:68.4px"></div><div class="panel" style="left:106px;top:772px;width:1179px;height:455px"></div><div style="position:absolute;left:218px;top:785px;width:1030px;height:371px;background:#fafafa;border-left:1.5px solid #777;border-top:1.5px solid #777;box-sizing:border-box"></div><svg style="position:absolute;left:0;top:0" width="1714" height="1285"><rect x="208" y="1152.7" width="7" height="1.6" fill="#d8303a"/><rect x="208" y="1079.3" width="7" height="1.6" fill="#d8303a"/><rect x="208" y="1005.9000000000001" width="7" height="1.6" fill="#d8303a"/><rect x="208" y="932.5" width="7" height="1.6" fill="#d8303a"/><rect x="208" y="859.1" width="7" height="1.6" fill="#d8303a"/><rect x="208" y="785.7" width="7" height="1.6" fill="#d8303a"/><rect x="218.6" y="1157.5" width="1.8" height="8" fill="#222"/><rect x="312.05" y="1157.5" width="1.8" height="8" fill="#222"/><rect x="405.5" y="1157.5" width="1.8" height="8" fill="#222"/><rect x="498.95000000000005" y="1157.5" width="1.8" height="8" fill="#222"/><rect x="592.4" y="1157.5" width="1.8" height="8" fill="#222"/><rect x="685.85" y="1157.5" width="1.8" height="8" fill="#222"/><rect x="779.3000000000001" y="1157.5" width="1.8" height="8" fill="#222"/><rect x="872.75" y="1157.5" width="1.8" height="8" fill="#222"/><rect x="966.2" y="1157.5" width="1.8" height="8" fill="#222"/><rect x="1059.65" y="1157.5" width="1.8" height="8" fill="#222"/><rect x="1153.1" y="1157.5" width="1.8" height="8" fill="#222"/><rect x="1246.55" y="1157.5" width="1.8" height="8" fill="#222"/></svg><div class="t" style="left:126px;top:1013px;transform-origin:0 0;transform:rotate(-90deg) scaleX(1.05);font-size:20px;line-height:20px;color:#d8303a;-webkit-text-stroke:0.35px #d8303a;font-family:'Liberation Sans',sans-serif">UV(mAu)</div><div class="panel" style="left:1287px;top:772px;width:215px;height:404px"></div><svg style="position:absolute;left:0;top:0" width="1714" height="1285"><defs><linearGradient id="cbg" x1="0" y1="0" x2="1" y2="1"><stop offset="0" stop-color="#c8c8c8"/><stop offset=".6" stop-color="#ececec"/><stop offset="1" stop-color="#fafafa"/></linearGradient></defs><rect x="1310.5" y="782.5" width="20" height="20" fill="url(#cbg)" stroke="#7a7a7a" stroke-width="1.4"/><rect x="1312.3" y="784.3" width="16.4" height="16.4" fill="none" stroke="#fafafa" stroke-width="1.1"/><rect x="1440.5" y="777.5" width="47" height="33" fill="#fefefe"/><path d="M1440.5 810.5V777.5H1487.5" fill="none" stroke="#6a6a6a" stroke-width="1.6"/><path d="M1443.5 804.5L1455.5 783.5L1468.5 804.5L1484.5 781.5" fill="none" stroke="#e02828" stroke-width="1.1"/><rect x="1310.5" y="827.75" width="20" height="20" fill="url(#cbg)" stroke="#7a7a7a" stroke-width="1.4"/><rect x="1312.3" y="829.55" width="16.4" height="16.4" fill="none" stroke="#fafafa" stroke-width="1.1"/><rect x="1440.5" y="822.75" width="47" height="33" fill="#efefef"/><path d="M1440.5 855.75V822.75H1487.5" fill="none" stroke="#d0d0d0" stroke-width="1.2"/><path d="M1443.5 849.75L1455.5 828.75L1468.5 849.75L1484.5 826.75" fill="none" stroke="#808080" stroke-width="1.1"/><rect x="1310.5" y="873.0" width="20" height="20" fill="url(#cbg)" stroke="#7a7a7a" stroke-width="1.4"/><rect x="1312.3" y="874.8" width="16.4" height="16.4" fill="none" stroke="#fafafa" stroke-width="1.1"/><rect x="1440.5" y="868.0" width="47" height="33" fill="#efefef"/><path d="M1440.5 901.0V868.0H1487.5" fill="none" stroke="#d0d0d0" stroke-width="1.2"/><path d="M1443.5 895.0L1455.5 874.0L1468.5 895.0L1484.5 872.0" fill="none" stroke="#7cd86a" stroke-width="1.1"/><rect x="1310.5" y="918.25" width="20" height="20" fill="url(#cbg)" stroke="#7a7a7a" stroke-width="1.4"/><rect x="1312.3" y="920.05" width="16.4" height="16.4" fill="none" stroke="#fafafa" stroke-width="1.1"/><rect x="1440.5" y="913.25" width="47" height="33" fill="#efefef"/><path d="M1440.5 946.25V913.25H1487.5" fill="none" stroke="#d0d0d0" stroke-width="1.2"/><path d="M1443.5 940.25L1455.5 919.25L1468.5 940.25L1484.5 917.25" fill="none" stroke="#7aa0ee" stroke-width="1.1"/><rect x="1310.5" y="963.5" width="20" height="20" fill="url(#cbg)" stroke="#7a7a7a" stroke-width="1.4"/><rect x="1312.3" y="965.3" width="16.4" height="16.4" fill="none" stroke="#fafafa" stroke-width="1.1"/><rect x="1440.5" y="958.5" width="47" height="33" fill="#efefef"/><path d="M1440.5 991.5V958.5H1487.5" fill="none" stroke="#d0d0d0" stroke-width="1.2"/><path d="M1443.5 985.5L1455.5 964.5L1468.5 985.5L1484.5 962.5" fill="none" stroke="#dcd870" stroke-width="1.1"/><rect x="1310.5" y="1008.75" width="20" height="20" fill="url(#cbg)" stroke="#7a7a7a" stroke-width="1.4"/><rect x="1312.3" y="1010.55" width="16.4" height="16.4" fill="none" stroke="#fafafa" stroke-width="1.1"/><rect x="1440.5" y="1003.75" width="47" height="33" fill="#efefef"/><path d="M1440.5 1036.75V1003.75H1487.5" fill="none" stroke="#d0d0d0" stroke-width="1.2"/><path d="M1443.5 1030.75L1455.5 1009.75L1468.5 1030.75L1484.5 1007.75" fill="none" stroke="#ee80a8" stroke-width="1.1"/><rect x="1310.5" y="1054.0" width="20" height="20" fill="url(#cbg)" stroke="#7a7a7a" stroke-width="1.4"/><rect x="1312.3" y="1055.8" width="16.4" height="16.4" fill="none" stroke="#fafafa" stroke-width="1.1"/><rect x="1440.5" y="1049.0" width="47" height="33" fill="#efefef"/><path d="M1440.5 1082.0V1049.0H1487.5" fill="none" stroke="#d0d0d0" stroke-width="1.2"/><path d="M1443.5 1076.0L1455.5 1055.0L1468.5 1076.0L1484.5 1053.0" fill="none" stroke="#5cb4a4" stroke-width="1.1"/><rect x="1310.5" y="1099.25" width="20" height="20" fill="url(#cbg)" stroke="#7a7a7a" stroke-width="1.4"/><rect x="1312.3" y="1101.05" width="16.4" height="16.4" fill="none" stroke="#fafafa" stroke-width="1.1"/><rect x="1440.5" y="1094.25" width="47" height="33" fill="#efefef"/><path d="M1440.5 1127.25V1094.25H1487.5" fill="none" stroke="#d0d0d0" stroke-width="1.2"/><path d="M1443.5 1121.25L1455.5 1100.25L1468.5 1121.25L1484.5 1098.25" fill="none" stroke="#e868e8" stroke-width="1.1"/><rect x="1310.5" y="1144.5" width="20" height="20" fill="url(#cbg)" stroke="#7a7a7a" stroke-width="1.4"/><rect x="1312.3" y="1146.3" width="16.4" height="16.4" fill="none" stroke="#fafafa" stroke-width="1.1"/><rect x="1440.5" y="1139.5" width="47" height="33" fill="#efefef"/><path d="M1440.5 1172.5V1139.5H1487.5" fill="none" stroke="#d0d0d0" stroke-width="1.2"/><path d="M1443.5 1166.5L1455.5 1145.5L1468.5 1166.5L1484.5 1143.5" fill="none" stroke="#c878e8" stroke-width="1.1"/><path d="M1315.5 792.5L1319.5 799L1326 786" fill="none" stroke="#3a4c9c" stroke-width="2.4" stroke-linecap="round"/></svg><div class="wbtn" style="left:1580px;top:804px;width:103px;height:46px"></div><div class="wbtn" style="left:1580px;top:897px;width:103px;height:44px"></div><div class="wbtn" style="left:1580px;top:993px;width:103px;height:44px"></div><div class="wbtn" style="left:1580px;top:1084px;width:103px;height:44px"></div><div class="wbtn" style="left:1580px;top:1178px;width:103px;height:44px"></div><div class="wbtn" style="left:1322px;top:1233px;width:126px;height:38px"></div><div style="position:absolute;left:1353px;top:564px;width:106px;height:45px;box-sizing:border-box;border:3px solid;border-color:#cfcfcf #f4f4f4 #f6f6f6 #d4d4d4;background:radial-gradient(ellipse 40px 14px at 22px 10px,rgba(200,255,170,.75),rgba(120,255,60,0)),linear-gradient(90deg,#48ee14,#54f418 60%,#2ea80e);"></div><div style="position:absolute;left:1357px;top:617.5px;width:100px;height:50px;box-sizing:border-box;border:2px solid #3a3a3a;background:linear-gradient(#fafafa,#efefef);box-shadow:inset -5px -5px 5px rgba(0,0,0,.22),inset 4px 4px 3px #fff"></div><svg style="position:absolute;left:0;top:0" width="120" height="1285"><defs><linearGradient id="scr" x1="0" y1="0" x2="1" y2="1"><stop offset="0" stop-color="#101c22"/><stop offset=".6" stop-color="#2a3c44"/><stop offset="1" stop-color="#5a6e78"/></linearGradient><linearGradient id="bookF" x1="0" y1="0" x2="1" y2="0"><stop offset="0" stop-color="#f89418"/><stop offset="1" stop-color="#f0a030"/></linearGradient></defs><path d="M23.5 865L55.5 877.5L62.5 899.5L28.5 898.5Z" fill="url(#scr)"/><path d="M16.5 861L23.5 865L28.5 898.5L27 905Z" fill="#c8ccd0"/><path d="M16.5 861L27 905" stroke="#777" stroke-width="1.6" stroke-dasharray="2.5 2"/><path d="M28.5 898.5L62.5 899.5L65 904L27 905Z" fill="#d8dce0" stroke="#aab" stroke-width=".6"/><path d="M22 911H48M32 905V911" stroke="#c0c4c8" stroke-width="1.4"/><circle cx="35" cy="884" r=".7" fill="#9ab"/><circle cx="40" cy="889" r=".7" fill="#9ab"/><circle cx="44" cy="893" r=".7" fill="#9ab"/><circle cx="31" cy="889" r=".7" fill="#9ab"/><circle cx="47" cy="896" r=".7" fill="#9ab"/><path d="M21.5 1060L48 1052L64 1075L42 1087Z" fill="#f4f6fa"/><path d="M21.5 1060L48 1052L52 1058L27 1066Z" fill="#f0a040"/><path d="M45 1084L62 1075" stroke="#555" stroke-width="1.4" stroke-dasharray="1.5 1.5"/><path d="M26 1066L38 1062M29 1070L44 1065" stroke="#9cc4e0" stroke-width="1"/><path d="M25 1041Q25 1037 29 1037H33Q37 1037 37 1041V1045Q38.5 1047 38 1051V1058H25V1051Q24 1047 25 1045Z" fill="#24b040"/><path d="M39 1074L63 1052L68.5 1057L44 1077Z" fill="#f4c020"/><path d="M44 1077L68.5 1057L66 1062L47 1078Z" fill="#e88a18"/><path d="M39 1074L44 1077L38 1078Z" fill="#555"/><path d="M18 1250L45 1242L67 1249L43 1262Z" fill="#f4f6f8"/><path d="M18 1250L43 1262" stroke="#f08a30" stroke-width="1.5" stroke-dasharray="2 1.2"/><path d="M43 1262L66 1250" stroke="#556" stroke-width="1" stroke-dasharray="1.2 2"/><path d="M35 1225L43 1222V1253L35 1251Z" fill="#ec6a20"/><path d="M43 1222L56 1218V1248L43 1253Z" fill="url(#bookF)"/><path d="M35 1225L48 1220L56 1218L43 1222Z" fill="#e8e0d0" stroke="#e07a30" stroke-width=".8"/></svg><div class="t" style="left:487.00px;top:21.57px;font-size:20.10px;line-height:32.17px;transform:scaleX(1.0024);color:#1e1e1e;font-weight:400;font-family:'Liberation Sans', sans-serif;">运行状态</div><div class="t" style="left:591.98px;top:20.67px;font-size:21.41px;line-height:34.25px;transform:scaleX(0.9696);color:#1e40c8;font-weight:700;font-family:'Liberation Sans', sans-serif;">STOP</div><div class="t" style="left:679.17px;top:21.90px;font-size:20.00px;line-height:32.00px;transform:scaleX(1.0164);color:#1e1e1e;font-weight:400;font-family:'Liberation Sans', sans-serif;">当前登录者</div><div class="t" style="left:796.05px;top:19.42px;font-size:21.62px;line-height:34.59px;transform:scaleX(1.0990);color:#1e1e1e;font-weight:400;font-family:'Liberation Sans', sans-serif;">ad</div><div class="t" style="left:892.17px;top:22.49px;font-size:19.39px;line-height:31.02px;transform:scaleX(1.0658);color:#1e1e1e;font-weight:400;font-family:'Liberation Sans', sans-serif;">产品批号</div><div class="t" style="left:987.22px;top:20.42px;font-size:21.62px;line-height:34.59px;transform:scaleX(1.0269);color:#1e1e1e;font-weight:400;font-family:'Liberation Sans', sans-serif;">Default Name</div><div class="t" style="left:1143.39px;top:23.83px;font-size:17.71px;line-height:28.33px;transform:scaleX(1.1466);color:#1e1e1e;font-weight:400;font-family:'Liberation Sans', sans-serif;">采集名称</div><div class="t" style="left:1397.11px;top:22.25px;font-size:18.95px;line-height:30.32px;transform:scaleX(1.1082);color:#1e1e1e;font-weight:400;font-family:'Liberation Sans', sans-serif;">当前时间</div><div class="t" style="left:1492.91px;top:17.85px;font-size:22.97px;line-height:36.76px;transform:scaleX(0.9452);color:#1e1e1e;font-weight:400;font-family:'Liberation Sans', sans-serif;">2016/1/23 10:27:31</div><div class="t" style="left:369.39px;top:84.31px;font-size:19.37px;line-height:30.99px;transform:scaleX(1.0512);color:#1e1e1e;font-weight:400;font-family:'Liberation Sans', sans-serif;">运行</div><div class="t" style="left:479.28px;top:86.12px;font-size:17.81px;line-height:28.50px;transform:scaleX(1.1839);color:#a9a9a9;font-weight:400;font-family:'Liberation Sans', sans-serif;">暂停</div><div class="t" style="left:594.60px;top:85.18px;font-size:18.54px;line-height:29.67px;transform:scaleX(1.0787);color:#a9a9a9;font-weight:400;font-family:'Liberation Sans', sans-serif;">保持</div><div class="t" style="left:704.50px;top:85.39px;font-size:18.53px;line-height:29.64px;transform:scaleX(1.0933);color:#a9a9a9;font-weight:400;font-family:'Liberation Sans', sans-serif;">继续</div><div class="t" style="left:819.80px;top:85.39px;font-size:18.53px;line-height:29.64px;transform:scaleX(1.0906);color:#a9a9a9;font-weight:400;font-family:'Liberation Sans', sans-serif;">停止</div><div class="t" style="left:1019.90px;top:79.44px;font-size:19.57px;line-height:31.32px;transform:scaleX(1.0308);color:#111;font-weight:400;font-family:'Liberation Sans', sans-serif;-webkit-text-stroke:0.45px #111;">登录管理</div><div class="t" style="left:1158.59px;top:80.15px;font-size:18.59px;line-height:29.74px;transform:scaleX(1.0925);color:#111;font-weight:400;font-family:'Liberation Sans', sans-serif;-webkit-text-stroke:0.45px #111;">参数设置</div><div class="t" style="left:1296.39px;top:80.52px;font-size:18.59px;line-height:29.74px;transform:scaleX(1.0925);color:#111;font-weight:400;font-family:'Liberation Sans', sans-serif;-webkit-text-stroke:0.45px #111;">方法编辑</div><div class="t" style="left:1435.39px;top:79.84px;font-size:18.97px;line-height:30.35px;transform:scaleX(1.0704);color:#111;font-weight:400;font-family:'Liberation Sans', sans-serif;-webkit-text-stroke:0.45px #111;">历史数据</div><div class="t" style="left:1576.39px;top:80.47px;font-size:18.78px;line-height:30.04px;transform:scaleX(1.0842);color:#111;font-weight:400;font-family:'Liberation Sans', sans-serif;-webkit-text-stroke:0.45px #111;">退出程序</div><div class="t" style="left:41.38px;top:148.94px;font-size:20.80px;line-height:33.28px;transform:scaleX(0.9864);color:#1e1e1e;font-weight:400;font-family:'Liberation Sans', sans-serif;">累计时间(min)</div><div class="t" style="left:191.70px;top:148.94px;font-size:20.80px;line-height:33.28px;transform:scaleX(0.9555);color:#1e1e1e;font-weight:400;font-family:'Liberation Sans', sans-serif;">透过累计体积(L)</div><div class="t" style="left:47.58px;top:184.34px;font-size:21.69px;line-height:34.70px;transform:scaleX(1.0565);color:#1e1e1e;font-weight:400;font-family:'Liberation Sans', sans-serif;">0</div><div class="t" style="left:197.58px;top:184.34px;font-size:21.69px;line-height:34.70px;transform:scaleX(1.0565);color:#1e1e1e;font-weight:400;font-family:'Liberation Sans', sans-serif;">0</div><div class="t" style="left:432.79px;top:147.68px;font-size:21.00px;line-height:33.60px;transform:scaleX(1.0166);color:#1e1e1e;font-weight:400;font-family:'Liberation Sans', sans-serif;">DeltaP(bar)</div><div class="t" style="left:438.63px;top:185.36px;font-size:22.54px;line-height:36.06px;transform:scaleX(0.9662);color:#1e1e1e;font-weight:400;font-family:'Liberation Sans', sans-serif;">0.08</div><div class="t" style="left:572.32px;top:148.68px;font-size:21.00px;line-height:33.60px;transform:scaleX(1.0008);color:#1e1e1e;font-weight:400;font-family:'Liberation Sans', sans-serif;">Flux(LMH)</div><div class="t" style="left:579.13px;top:185.36px;font-size:22.54px;line-height:36.06px;transform:scaleX(0.9662);color:#1e1e1e;font-weight:400;font-family:'Liberation Sans', sans-serif;">0.07</div><div class="t" style="left:699.94px;top:147.36px;font-size:22.54px;line-height:36.06px;transform:scaleX(0.9397);color:#1e1e1e;font-weight:400;font-family:'Liberation Sans', sans-serif;">ConcFactor</div><div class="t" style="left:707.61px;top:186.50px;font-size:21.74px;line-height:34.78px;transform:scaleX(0.9735);color:#1e1e1e;font-weight:400;font-family:'Liberation Sans', sans-serif;">1</div><div class="t" style="left:837.00px;top:148.68px;font-size:21.00px;line-height:33.60px;transform:scaleX(1.0253);color:#1e1e1e;font-weight:400;font-family:'Liberation Sans', sans-serif;">AirPre(bar)</div><div class="t" style="left:843.08px;top:185.36px;font-size:22.54px;line-height:36.06px;transform:scaleX(1.0169);color:#1e1e1e;font-weight:400;font-family:'Liberation Sans', sans-serif;">0</div><div class="t" style="left:1220.37px;top:143.36px;font-size:22.54px;line-height:36.06px;transform:scaleX(0.9039);color:#1e1e1e;font-weight:400;font-family:'Liberation Sans', sans-serif;">PLC OK!</div><div class="t" style="left:1320.26px;top:143.36px;font-size:22.54px;line-height:36.06px;transform:scaleX(0.9647);color:#1e1e1e;font-weight:400;font-family:'Liberation Sans', sans-serif;">UV OK!</div><div class="t" style="left:1421.00px;top:143.21px;font-size:22.86px;line-height:36.57px;transform:scaleX(0.8984);color:#1e1e1e;font-weight:400;font-family:'Liberation Sans', sans-serif;">ALARM</div><div class="t" style="left:1506.31px;top:143.36px;font-size:22.54px;line-height:36.06px;transform:scaleX(0.9381);color:#1e1e1e;font-weight:400;font-family:'Liberation Sans', sans-serif;">METHOD</div><div class="t" style="left:1606.42px;top:143.36px;font-size:22.54px;line-height:36.06px;transform:scaleX(0.8749);color:#1e1e1e;font-weight:400;font-family:'Liberation Sans', sans-serif;">RECORD</div><div class="t" style="left:192.80px;top:231.99px;font-size:21.13px;line-height:33.80px;transform:scaleX(0.9576);color:#1e1e1e;font-weight:400;font-family:'Liberation Sans', sans-serif;">V03</div><div class="t" style="left:291.38px;top:312.56px;font-size:19.80px;line-height:31.68px;transform:scaleX(1.0243);color:#1e1e1e;font-weight:400;font-family:'Liberation Sans', sans-serif;">比例阀开度(%)</div><div class="t" style="left:298.88px;top:344.36px;font-size:22.54px;line-height:36.06px;transform:scaleX(0.9562);color:#1e1e1e;font-weight:400;font-family:'Liberation Sans', sans-serif;">100</div><div class="t" style="left:422.84px;top:338.76px;font-size:19.80px;line-height:31.68px;transform:scaleX(1.0464);color:#1e1e1e;font-weight:400;font-family:'Liberation Sans', sans-serif;">回流流量(L/min)</div><div class="t" style="left:427.98px;top:376.18px;font-size:20.70px;line-height:33.13px;transform:scaleX(0.9866);color:#1e1e1e;font-weight:400;font-family:'Liberation Sans', sans-serif;">0.05</div><div class="t" style="left:621.12px;top:338.86px;font-size:19.80px;line-height:31.68px;transform:scaleX(1.0525);color:#1e1e1e;font-weight:400;font-family:'Liberation Sans', sans-serif;">回流电导(mS/cm)</div><div class="t" style="left:628.58px;top:376.18px;font-size:20.70px;line-height:33.13px;transform:scaleX(1.1069);color:#1e1e1e;font-weight:400;font-family:'Liberation Sans', sans-serif;">0</div><div class="t" style="left:787.11px;top:339.06px;font-size:19.80px;line-height:31.68px;transform:scaleX(1.0593);color:#1e1e1e;font-weight:400;font-family:'Liberation Sans', sans-serif;">回流压力(bar)</div><div class="t" style="left:795.14px;top:375.19px;font-size:22.25px;line-height:35.61px;transform:scaleX(0.9702);color:#1e1e1e;font-weight:400;font-family:'Liberation Sans', sans-serif;">-0.06</div><div class="t" style="left:922.58px;top:337.60px;font-size:20.00px;line-height:32.00px;transform:scaleX(1.0507);color:#1e1e1e;font-weight:400;font-family:'Liberation Sans', sans-serif;">TMP(bar)</div><div class="t" style="left:929.16px;top:375.68px;font-size:21.83px;line-height:34.93px;transform:scaleX(0.9621);color:#1e1e1e;font-weight:400;font-family:'Liberation Sans', sans-serif;">-0.02</div><div class="t" style="left:1045.61px;top:331.76px;font-size:19.80px;line-height:31.68px;transform:scaleX(0.9802);color:#1e1e1e;font-weight:400;font-family:'Liberation Sans', sans-serif;">温度(°C)</div><div class="t" style="left:1051.64px;top:365.54px;font-size:23.24px;line-height:37.18px;transform:scaleX(0.9141);color:#1e1e1e;font-weight:400;font-family:'Liberation Sans', sans-serif;">9.66</div><div class="t" style="left:1044.68px;top:411.87px;font-size:19.80px;line-height:31.68px;transform:scaleX(1.0443);color:#1e1e1e;font-weight:400;font-family:'Liberation Sans', sans-serif;">透过电导(mS/cm)</div><div class="t" style="left:1051.79px;top:446.98px;font-size:23.38px;line-height:37.41px;transform:scaleX(0.9713);color:#1e1e1e;font-weight:400;font-family:'Liberation Sans', sans-serif;">0</div><div class="t" style="left:1220.38px;top:412.46px;font-size:19.80px;line-height:31.68px;transform:scaleX(1.0432);color:#1e1e1e;font-weight:400;font-family:'Liberation Sans', sans-serif;">透过流量(L/min)</div><div class="t" style="left:1239.16px;top:446.04px;font-size:23.24px;line-height:37.18px;transform:scaleX(0.9022);color:#1e1e1e;font-weight:400;font-family:'Liberation Sans', sans-serif;">0.01</div><div class="t" style="left:1375.59px;top:334.47px;font-size:19.80px;line-height:31.68px;transform:scaleX(1.0294);color:#1e1e1e;font-weight:400;font-family:'Liberation Sans', sans-serif;">氘灯(h)</div><div class="t" style="left:1380.91px;top:370.20px;font-size:22.00px;line-height:35.20px;transform:scaleX(0.9866);color:#1e1e1e;font-weight:400;font-family:'Liberation Sans', sans-serif;">7.2</div><div class="t" style="left:1374.52px;top:410.90px;font-size:20.00px;line-height:32.00px;transform:scaleX(1.0491);color:#1e1e1e;font-weight:400;font-family:'Liberation Sans', sans-serif;">UV(mAu)</div><div class="t" style="left:1381.08px;top:449.68px;font-size:21.83px;line-height:34.93px;transform:scaleX(1.0497);color:#1e1e1e;font-weight:400;font-family:'Liberation Sans', sans-serif;">0</div><div class="t" style="left:1522.80px;top:331.73px;font-size:23.94px;line-height:38.31px;transform:scaleX(0.8450);color:#1e1e1e;font-weight:400;font-family:'Liberation Sans', sans-serif;">V05</div><div class="t" style="left:1528.79px;top:460.99px;font-size:21.13px;line-height:33.80px;transform:scaleX(1.0065);color:#1e1e1e;font-weight:400;font-family:'Liberation Sans', sans-serif;">V04</div><div class="t" style="left:552.80px;top:397.63px;font-size:19.72px;line-height:31.55px;transform:scaleX(1.0320);color:#1e1e1e;font-weight:400;font-family:'Liberation Sans', sans-serif;">V02</div><div class="t" style="left:823.80px;top:552.63px;font-size:19.72px;line-height:31.55px;transform:scaleX(1.0320);color:#1e1e1e;font-weight:400;font-family:'Liberation Sans', sans-serif;">V01</div><div class="t" style="left:352.60px;top:497.97px;font-size:19.80px;line-height:31.68px;transform:scaleX(1.0169);color:#1e1e1e;font-weight:400;font-family:'Liberation Sans', sans-serif;">泵转速(%)</div><div class="t" style="left:459.21px;top:498.44px;font-size:19.01px;line-height:30.42px;transform:scaleX(1.0409);color:#1e1e1e;font-weight:400;font-family:'Liberation Sans', sans-serif;">0</div><div class="t" style="left:296.58px;top:544.76px;font-size:19.80px;line-height:31.68px;transform:scaleX(1.0489);color:#1e1e1e;font-weight:400;font-family:'Liberation Sans', sans-serif;">进料流量(L/min)</div><div class="t" style="left:458.16px;top:541.18px;font-size:21.83px;line-height:34.93px;transform:scaleX(0.9605);color:#1e1e1e;font-weight:400;font-family:'Liberation Sans', sans-serif;">0.06</div><div class="t" style="left:580.58px;top:502.57px;font-size:19.80px;line-height:31.68px;transform:scaleX(1.0553);color:#1e1e1e;font-weight:400;font-family:'Liberation Sans', sans-serif;">进料压力(bar)</div><div class="t" style="left:587.18px;top:541.44px;font-size:19.01px;line-height:30.42px;transform:scaleX(1.0745);color:#1e1e1e;font-weight:400;font-family:'Liberation Sans', sans-serif;">0.02</div><div class="t" style="left:800.12px;top:481.62px;font-size:19.59px;line-height:31.34px;transform:scaleX(1.0673);color:#1e1e1e;font-weight:400;font-family:'Liberation Sans', sans-serif;">回流端</div><div class="t" style="left:1052.39px;top:554.53px;font-size:18.09px;line-height:28.94px;transform:scaleX(1.1323);color:#1e1e1e;font-weight:400;font-family:'Liberation Sans', sans-serif;">透过端</div><div class="t" style="left:807.59px;top:638.90px;font-size:20.00px;line-height:32.00px;transform:scaleX(1.0204);color:#1e1e1e;font-weight:400;font-family:'Liberation Sans', sans-serif;">进料端</div><div class="t" style="left:1369.17px;top:572.57px;font-size:19.80px;line-height:31.68px;transform:scaleX(1.0859);color:#1e1e1e;font-weight:400;font-family:'Liberation Sans', sans-serif;">氘灯ON</div><div class="t" style="left:1371.02px;top:628.77px;font-size:19.80px;line-height:31.68px;transform:scaleX(1.0614);color:#1e1e1e;font-weight:400;font-family:'Liberation Sans', sans-serif;">UV清零</div><div class="t" style="left:157.37px;top:770.99px;font-size:21.13px;line-height:33.80px;transform:scaleX(0.9646);color:#d8303a;font-weight:400;font-family:'Liberation Sans', sans-serif;">1000</div><div class="t" style="left:168.17px;top:845.63px;font-size:19.72px;line-height:31.55px;transform:scaleX(1.0526);color:#d8303a;font-weight:400;font-family:'Liberation Sans', sans-serif;">800</div><div class="t" style="left:167.96px;top:919.33px;font-size:19.72px;line-height:31.55px;transform:scaleX(1.0592);color:#d8303a;font-weight:400;font-family:'Liberation Sans', sans-serif;">600</div><div class="t" style="left:168.59px;top:992.19px;font-size:19.58px;line-height:31.32px;transform:scaleX(1.0470);color:#d8303a;font-weight:400;font-family:'Liberation Sans', sans-serif;">400</div><div class="t" style="left:167.96px;top:1063.37px;font-size:21.41px;line-height:34.25px;transform:scaleX(0.9756);color:#d8303a;font-weight:400;font-family:'Liberation Sans', sans-serif;">200</div><div class="t" style="left:191.92px;top:1138.63px;font-size:19.72px;line-height:31.55px;transform:scaleX(0.9826);color:#d8303a;font-weight:400;font-family:'Liberation Sans', sans-serif;">0</div><div class="t" style="left:212.75px;top:1164.47px;font-size:21.41px;line-height:34.25px;transform:scaleX(0.9926);color:#1e1e1e;font-weight:400;font-family:'Liberation Sans', sans-serif;">0</div><div class="t" style="left:292.18px;top:1163.49px;font-size:22.25px;line-height:35.61px;transform:scaleX(0.9181);color:#1e1e1e;font-weight:400;font-family:'Liberation Sans', sans-serif;">0.02</div><div class="t" style="left:385.69px;top:1163.49px;font-size:22.25px;line-height:35.61px;transform:scaleX(0.9083);color:#1e1e1e;font-weight:400;font-family:'Liberation Sans', sans-serif;">0.04</div><div class="t" style="left:479.18px;top:1163.49px;font-size:22.25px;line-height:35.61px;transform:scaleX(0.9181);color:#1e1e1e;font-weight:400;font-family:'Liberation Sans', sans-serif;">0.06</div><div class="t" style="left:572.68px;top:1163.49px;font-size:22.25px;line-height:35.61px;transform:scaleX(0.9181);color:#1e1e1e;font-weight:400;font-family:'Liberation Sans', sans-serif;">0.08</div><div class="t" style="left:669.11px;top:1163.49px;font-size:22.25px;line-height:35.61px;transform:scaleX(1.0024);color:#1e1e1e;font-weight:400;font-family:'Liberation Sans', sans-serif;">0.1</div><div class="t" style="left:759.14px;top:1163.49px;font-size:22.25px;line-height:35.61px;transform:scaleX(0.9664);color:#1e1e1e;font-weight:400;font-family:'Liberation Sans', sans-serif;">0.12</div><div class="t" style="left:852.65px;top:1163.49px;font-size:22.25px;line-height:35.61px;transform:scaleX(0.9561);color:#1e1e1e;font-weight:400;font-family:'Liberation Sans', sans-serif;">0.14</div><div class="t" style="left:945.73px;top:1162.36px;font-size:22.54px;line-height:36.06px;transform:scaleX(0.9638);color:#1e1e1e;font-weight:400;font-family:'Liberation Sans', sans-serif;">0.16</div><div class="t" style="left:1038.14px;top:1162.36px;font-size:22.54px;line-height:36.06px;transform:scaleX(0.9543);color:#1e1e1e;font-weight:400;font-family:'Liberation Sans', sans-serif;">0.18</div><div class="t" style="left:1136.86px;top:1162.36px;font-size:22.54px;line-height:36.06px;transform:scaleX(0.9319);color:#1e1e1e;font-weight:400;font-family:'Liberation Sans', sans-serif;">0.2</div><div class="t" style="left:1226.18px;top:1162.36px;font-size:22.54px;line-height:36.06px;transform:scaleX(0.9066);color:#1e1e1e;font-weight:400;font-family:'Liberation Sans', sans-serif;">0.22</div><div class="t" style="left:608.78px;top:1196.10px;font-size:20.00px;line-height:32.00px;transform:scaleX(1.0887);color:#1e1e1e;font-weight:400;font-family:'Liberation Sans', sans-serif;">t(min)</div><div class="t" style="left:1340.28px;top:776.31px;font-size:22.14px;line-height:35.43px;transform:scaleX(0.9727);color:#1e1e1e;font-weight:400;font-family:'Liberation Sans', sans-serif;">UV</div><div class="t" style="left:1341.58px;top:820.16px;font-size:23.57px;line-height:37.71px;transform:scaleX(0.8942);color:#1e1e1e;font-weight:400;font-family:'Liberation Sans', sans-serif;">TMP</div><div class="t" style="left:1341.39px;top:869.36px;font-size:19.79px;line-height:31.67px;transform:scaleX(1.0284);color:#1e1e1e;font-weight:400;font-family:'Liberation Sans', sans-serif;">透过流量</div><div class="t" style="left:1341.39px;top:913.37px;font-size:20.10px;line-height:32.16px;transform:scaleX(1.0178);color:#1e1e1e;font-weight:400;font-family:'Liberation Sans', sans-serif;">透过电导</div><div class="t" style="left:1341.60px;top:958.04px;font-size:20.83px;line-height:33.33px;transform:scaleX(0.9699);color:#1e1e1e;font-weight:400;font-family:'Liberation Sans', sans-serif;">温度</div><div class="t" style="left:1340.14px;top:1003.97px;font-size:20.10px;line-height:32.16px;transform:scaleX(1.0283);color:#1e1e1e;font-weight:400;font-family:'Liberation Sans', sans-serif;">回流流量</div><div class="t" style="left:1340.13px;top:1049.15px;font-size:19.50px;line-height:31.20px;transform:scaleX(1.0656);color:#1e1e1e;font-weight:400;font-family:'Liberation Sans', sans-serif;">回流电导</div><div class="t" style="left:1340.11px;top:1093.97px;font-size:20.10px;line-height:32.16px;transform:scaleX(1.0451);color:#1e1e1e;font-weight:400;font-family:'Liberation Sans', sans-serif;">回流压力</div><div class="t" style="left:1341.59px;top:1138.23px;font-size:20.53px;line-height:32.84px;transform:scaleX(0.9922);color:#1e1e1e;font-weight:400;font-family:'Liberation Sans', sans-serif;">进料压力</div><div class="t" style="left:1595.88px;top:818.19px;font-size:18.51px;line-height:29.62px;transform:scaleX(1.0957);color:#1e1e1e;font-weight:400;font-family:'Liberation Sans', sans-serif;">曲线设置</div><div class="t" style="left:1596.90px;top:909.50px;font-size:19.68px;line-height:31.49px;transform:scaleX(1.0173);color:#1e1e1e;font-weight:400;font-family:'Liberation Sans', sans-serif;">显示标线</div><div class="t" style="left:1597.10px;top:1005.62px;font-size:18.42px;line-height:29.47px;transform:scaleX(1.0843);color:#1e1e1e;font-weight:400;font-family:'Liberation Sans', sans-serif;">设置标记</div><div class="t" style="left:1616.61px;top:1096.10px;font-size:19.39px;line-height:31.02px;transform:scaleX(1.0420);color:#1e1e1e;font-weight:400;font-family:'Liberation Sans', sans-serif;">快照</div><div class="t" style="left:1596.90px;top:1190.16px;font-size:20.11px;line-height:32.17px;transform:scaleX(0.9960);color:#1e1e1e;font-weight:400;font-family:'Liberation Sans', sans-serif;">全屏显示</div><div class="t" style="left:1362.86px;top:1237.64px;font-size:21.80px;line-height:34.88px;transform:scaleX(1.1210);color:#1e1e1e;font-weight:400;font-family:'Liberation Sans', sans-serif;">t/Vol</div><div class="t" style="left:15.90px;top:807.56px;font-size:21.21px;line-height:33.94px;transform:scaleX(1.0361);color:#1e1e1e;font-weight:400;font-family:'Liberation Serif', serif;-webkit-text-stroke:0.6px #111;">实</div><div class="t" style="left:40.68px;top:806.94px;font-size:21.88px;line-height:35.00px;transform:scaleX(1.0047);color:#1e1e1e;font-weight:400;font-family:'Liberation Serif', serif;-webkit-text-stroke:0.6px #111;">时</div><div class="t" style="left:18.43px;top:831.80px;font-size:22.34px;line-height:35.74px;transform:scaleX(1.0071);color:#1e1e1e;font-weight:400;font-family:'Liberation Serif', serif;-webkit-text-stroke:0.6px #111;">曲</div><div class="t" style="left:41.79px;top:831.87px;font-size:22.11px;line-height:35.37px;transform:scaleX(0.9524);color:#1e1e1e;font-weight:400;font-family:'Liberation Serif', serif;-webkit-text-stroke:0.6px #111;">线</div><div class="t" style="left:22.67px;top:982.52px;font-size:20.62px;line-height:32.99px;transform:scaleX(0.8083);color:#1e1e1e;font-weight:400;font-family:'Liberation Serif', serif;-webkit-text-stroke:0.6px #111;">系</div><div class="t" style="left:46.00px;top:982.52px;font-size:20.62px;line-height:32.99px;transform:scaleX(1.0393);color:#1e1e1e;font-weight:400;font-family:'Liberation Serif', serif;-webkit-text-stroke:0.6px #111;">统</div><div class="t" style="left:21.35px;top:1001.90px;font-size:26.67px;line-height:42.67px;transform:scaleX(0.6618);color:#1e1e1e;font-weight:400;font-family:'Liberation Serif', serif;-webkit-text-stroke:0.6px #111;">日</div><div class="t" style="left:46.00px;top:1004.32px;font-size:24.74px;line-height:39.59px;transform:scaleX(0.8165);color:#1e1e1e;font-weight:400;font-family:'Liberation Serif', serif;-webkit-text-stroke:0.6px #111;">志</div><div class="t" style="left:20.42px;top:1161.15px;font-size:22.68px;line-height:36.29px;transform:scaleX(0.8534);color:#1e1e1e;font-weight:400;font-family:'Liberation Serif', serif;-webkit-text-stroke:0.6px #111;">方</div><div class="t" style="left:45.79px;top:1160.55px;font-size:23.16px;line-height:37.05px;transform:scaleX(0.8996);color:#1e1e1e;font-weight:400;font-family:'Liberation Serif', serif;-webkit-text-stroke:0.6px #111;">法</div><div class="t" style="left:20.54px;top:1189.56px;font-size:19.15px;line-height:30.64px;transform:scaleX(1.1920);color:#1e1e1e;font-weight:400;font-family:'Liberation Serif', serif;-webkit-text-stroke:0.6px #111;">运</div><div class="t" style="left:46.00px;top:1189.18px;font-size:19.15px;line-height:30.64px;transform:scaleX(1.0767);color:#1e1e1e;font-weight:400;font-family:'Liberation Serif', serif;-webkit-text-stroke:0.6px #111;">行</div><div class="t" style="left:209.58px;top:33.87px;font-size:23.76px;line-height:38.02px;transform:scaleX(1.1401);color:#111;font-weight:700;font-family:'Liberation Sans', sans-serif;-webkit-text-stroke:0.9px #111;">慧德易</div><div class="t" style="left:209.20px;top:73.41px;font-size:24.49px;line-height:39.18px;transform:scaleX(0.9515);color:#111;font-weight:700;font-family:'Liberation Sans', sans-serif;-webkit-text-stroke:0.9px #111;">科</div><div class="t" style="left:266.20px;top:73.56px;font-size:24.00px;line-height:38.40px;transform:scaleX(0.9709);color:#111;font-weight:700;font-family:'Liberation Sans', sans-serif;-webkit-text-stroke:0.9px #111;">技</div><div class="t" style="left:41.32px;top:12.13px;font-size:65.28px;line-height:104.44px;transform:scaleX(1.0451);color:#13934a;font-weight:700;font-family:'Liberation Sans', sans-serif;font-style:italic;-webkit-text-stroke:2.2px #13934a;">H&amp;E</div><div class="t" style="left:41.23px;top:93.20px;font-size:9.04px;line-height:14.47px;transform:scaleX(1.4847);color:#e8761c;font-weight:700;font-family:'Liberation Sans', sans-serif;font-style:italic;-webkit-text-stroke:0.7px #e8761c;">High quality &amp; Expert</div><svg style="position:absolute;left:0;top:0" width="300" height="130"><path d="M128.5 69.5L136 66.5L139.5 73.5L132 77Z" fill="#e8761c"/></svg></body></html>
